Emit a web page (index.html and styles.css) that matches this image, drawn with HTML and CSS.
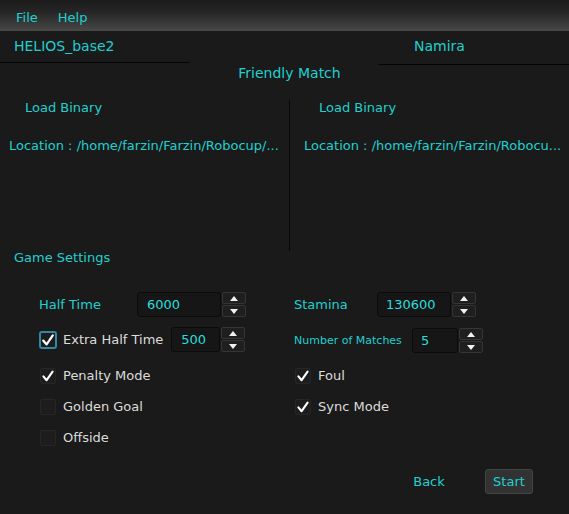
FILE: index.html
```html
<!DOCTYPE html>
<html>
<head>
<meta charset="utf-8">
<link rel="stylesheet" href="styles.css">
</head>
<body>
<div class="menubar">
  <span class="menu-item">File</span>
  <span class="menu-item">Help</span>
</div>
<div class="teams">
  <div class="team team-left">HELIOS_base2</div>
  <div class="team team-right">Namira</div>
</div>
<div class="match-title">Friendly Match</div>
<div class="panels">
  <div class="panel panel-left">
    <div class="load">Load Binary</div>
    <div class="location">Location : /home/farzin/Farzin/Robocup/...</div>
  </div>
  <div class="divider"></div>
  <div class="panel panel-right">
    <div class="load">Load Binary</div>
    <div class="location">Location : /home/farzin/Farzin/Robocu...</div>
  </div>
</div>
<div class="settings-title">Game Settings</div>
<div class="settings">
  <div class="col">
    <div class="row row-a">
      <span class="label w-half">Half Time</span>
      <div class="spin">
        <div class="spin-field w-6000">6000</div>
        <div class="spin-btns"><div class="sbtn"><span class="arr up"></span></div><div class="sbtn"><span class="arr down"></span></div></div>
      </div>
    </div>
    <div class="row row-b">
      <span class="box box-focus"><svg viewBox="0 0 14 14" width="14" height="14"><path d="M2.2 7.6 L5.6 11.4 L11.8 2.4" fill="none" stroke="#fff" stroke-width="2.2" stroke-linecap="round" stroke-linejoin="round"/></svg></span>
      <span class="opt">Extra Half Time</span>
      <div class="spin extra-spin">
        <div class="spin-field w-500">500</div>
        <div class="spin-btns"><div class="sbtn"><span class="arr up"></span></div><div class="sbtn"><span class="arr down"></span></div></div>
      </div>
    </div>
    <div class="row row-c">
      <span class="box"><svg viewBox="0 0 14 14" width="14" height="14"><path d="M2.4 7.4 L5.6 11.2 L11.6 2.6" fill="none" stroke="#fff" stroke-width="2.1" stroke-linecap="round" stroke-linejoin="round"/></svg></span>
      <span class="opt">Penalty Mode</span>
    </div>
    <div class="row row-c">
      <span class="box"></span>
      <span class="opt">Golden Goal</span>
    </div>
    <div class="row row-c">
      <span class="box"></span>
      <span class="opt">Offside</span>
    </div>
  </div>
  <div class="col">
    <div class="row row-a">
      <span class="label w-stam">Stamina</span>
      <div class="spin">
        <div class="spin-field w-stamina">130600</div>
        <div class="spin-btns"><div class="sbtn"><span class="arr up"></span></div><div class="sbtn"><span class="arr down"></span></div></div>
      </div>
    </div>
    <div class="row row-b row-b-right">
      <span class="label small w-num">Number of Matches</span>
      <div class="spin">
        <div class="spin-field w-5">5</div>
        <div class="spin-btns"><div class="sbtn"><span class="arr up"></span></div><div class="sbtn"><span class="arr down"></span></div></div>
      </div>
    </div>
    <div class="row row-c">
      <span class="box"><svg viewBox="0 0 14 14" width="14" height="14"><path d="M2.4 7.4 L5.6 11.2 L11.6 2.6" fill="none" stroke="#fff" stroke-width="2.1" stroke-linecap="round" stroke-linejoin="round"/></svg></span>
      <span class="opt">Foul</span>
    </div>
    <div class="row row-c">
      <span class="box"><svg viewBox="0 0 14 14" width="14" height="14"><path d="M2.4 7.4 L5.6 11.2 L11.6 2.6" fill="none" stroke="#fff" stroke-width="2.1" stroke-linecap="round" stroke-linejoin="round"/></svg></span>
      <span class="opt">Sync Mode</span>
    </div>
  </div>
</div>
<div class="actions">
  <button class="btn btn-flat">Back</button>
  <button class="btn btn-start">Start</button>
</div>
</body>
</html>
```
FILE: styles.css
```css
html, body {
  margin: 0;
  padding: 0;
  background: #1a1a1a;
}
body {
  width: 569px;
  height: 514px;
  overflow: hidden;
  font-family: "DejaVu Sans", "Liberation Sans", sans-serif;
  font-size: 13px;
  line-height: 15px;
  color: #1fd0d0;
}
.menubar {
  box-sizing: border-box;
  height: 31px;
  padding: 10px 0 0 16px;
  display: flex;
  gap: 20px;
  background: linear-gradient(#1b1b1b, #262626 40%, #484848);
}
.teams {
  display: flex;
  align-items: flex-start;
  height: 34px;
}
.team {
  box-sizing: border-box;
  font-size: 14px;
  line-height: 16px;
  padding-top: 7px;
  border-bottom: 1px solid #050505;
}
.team-left {
  width: 190px;
  height: 32px;
  padding-left: 14px;
}
.team-right {
  margin-left: auto;
  width: 190px;
  height: 34px;
  padding-left: 35px;
}
.match-title {
  font-size: 14px;
  line-height: 16px;
  text-align: center;
  padding-left: 10px;
}
.panels {
  margin-top: 19px;
  height: 150px;
  display: grid;
  grid-template-columns: 289px 1px 1fr;
}
.divider {
  background: #080808;
  height: 151px;
}
.location {
  margin-top: 23px;
  white-space: nowrap;
}
.panel-left .load { padding-left: 25px; }
.panel-left .location { padding-left: 9px; }
.panel-right .load { padding-left: 29px; }
.panel-right .location { padding-left: 14px; }
.settings-title {
  padding-left: 14px;
}
.settings {
  margin-top: 27px;
  padding-left: 39px;
  display: grid;
  grid-template-columns: 255px 1fr;
}
.col {
  display: flex;
  flex-direction: column;
}
.row {
  display: flex;
  align-items: center;
}
.row-a { height: 25px; margin-bottom: 10px; }
.row-b { height: 25px; margin-bottom: 8px; }
.row-b-right { margin-top: 1px; margin-bottom: 7px; }
.row-c { height: 31px; }
.label { flex: none; }
.w-half { width: 98px; }
.w-stam { width: 83px; }
.w-num { width: 118px; }
.small { font-size: 11px; }
.opt {
  color: #dcdcdc;
}
.spin {
  display: flex;
  height: 25px;
}
.extra-spin { margin-left: 8px; }
.spin-field {
  box-sizing: border-box;
  height: 25px;
  border: 1px solid #0b0b0b;
  border-radius: 3px;
  background: #161616;
  color: #28dede;
  padding-left: 9px;
  display: flex;
  align-items: center;
}
.w-6000 { width: 84px; }
.w-500 { width: 49px; }
.w-stamina { width: 74px; padding-left: 8px; }
.w-5 { width: 46px; padding-left: 8px; }
.spin-btns {
  width: 24px;
  margin-left: 1px;
  display: flex;
  flex-direction: column;
  gap: 1px;
}
.sbtn {
  box-sizing: border-box;
  flex: 1;
  border: 1px solid #353535;
  border-radius: 2px;
  background: #1f1f1f;
  display: flex;
  align-items: center;
  justify-content: center;
}
.arr {
  width: 0;
  height: 0;
  border-left: 4px solid transparent;
  border-right: 4px solid transparent;
}
.arr.up { border-bottom: 5px solid #f2f2f2; }
.arr.down { border-top: 5px solid #f2f2f2; }
.box {
  box-sizing: border-box;
  flex: none;
  width: 16px;
  height: 16px;
  margin-left: 1px;
  margin-right: 7px;
  border: 1px solid #262626;
  border-radius: 2px;
  background: #1d1d1d;
  display: flex;
  align-items: center;
  justify-content: center;
}
.box-focus {
  width: 18px;
  height: 18px;
  margin-left: 0;
  margin-right: 6px;
  border: 2px solid #3486a6;
  border-radius: 3px;
  background: #1c1c1c;
}
.actions {
  margin-top: 16px;
  display: flex;
  justify-content: flex-end;
  gap: 32px;
  padding-right: 36px;
}
.btn {
  box-sizing: border-box;
  width: 48px;
  height: 25px;
  padding: 0;
  font-family: inherit;
  font-size: 13px;
  color: #1fd0d0;
  border-radius: 3px;
}
.btn-flat {
  background: transparent;
  border: none;
}
.btn-start {
  background: #323232;
  border: 1px solid #444;
}
```
